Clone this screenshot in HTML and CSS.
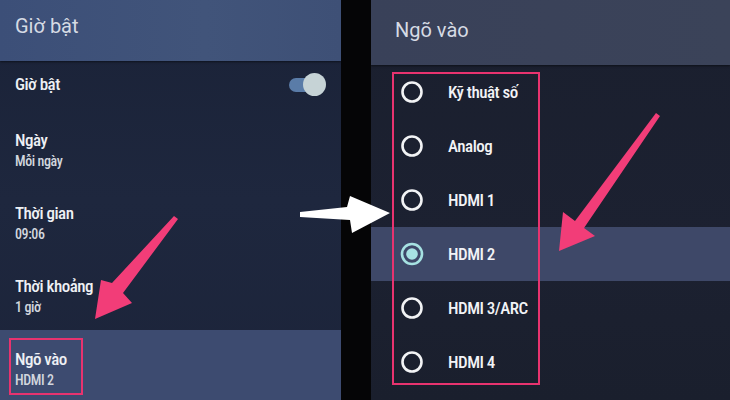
FILE: index.html
```html
<!DOCTYPE html>
<html lang="vi">
<head>
<meta charset="utf-8">
<title>Giờ bật - Ngõ vào</title>
<link rel="stylesheet" href="styles.css">
</head>
<body>
<div class="screen">
  <section class="panel panel-left">
    <header class="panel-head"><h1 class="panel-title">Giờ bật</h1></header>
    <ul class="menu">
      <li class="menu-row menu-row-single">
        <span class="item-title">Giờ bật</span>
        <span class="toggle"><span class="toggle-track"></span><span class="toggle-thumb"></span></span>
      </li>
      <li class="menu-row">
        <span class="item-title">Ngày</span>
        <span class="item-sub">Mỗi ngày</span>
      </li>
      <li class="menu-row">
        <span class="item-title">Thời gian</span>
        <span class="item-sub">09:06</span>
      </li>
      <li class="menu-row">
        <span class="item-title">Thời khoảng</span>
        <span class="item-sub">1 giờ</span>
      </li>
      <li class="menu-row menu-row-active">
        <span class="item-title">Ngõ vào</span>
        <span class="item-sub">HDMI 2</span>
      </li>
    </ul>
  </section>
  <section class="panel panel-right">
    <header class="panel-head panel-head-right"><h1 class="panel-title">Ngõ vào</h1></header>
    <ul class="options">
      <li class="option"><svg class="radio" viewBox="0 0 24 24"><circle cx="12" cy="12" r="9.5"/></svg><span class="option-label">Kỹ thuật số</span></li>
      <li class="option"><svg class="radio" viewBox="0 0 24 24"><circle cx="12" cy="12" r="9.5"/></svg><span class="option-label">Analog</span></li>
      <li class="option"><svg class="radio" viewBox="0 0 24 24"><circle cx="12" cy="12" r="9.5"/></svg><span class="option-label">HDMI 1</span></li>
      <li class="option option-active"><svg class="radio radio-on" viewBox="0 0 24 24"><circle cx="12" cy="12" r="10"/><circle class="dot" cx="12" cy="12" r="5.8"/></svg><span class="option-label">HDMI 2</span></li>
      <li class="option"><svg class="radio" viewBox="0 0 24 24"><circle cx="12" cy="12" r="9.5"/></svg><span class="option-label">HDMI 3/ARC</span></li>
      <li class="option"><svg class="radio" viewBox="0 0 24 24"><circle cx="12" cy="12" r="9.5"/></svg><span class="option-label">HDMI 4</span></li>
    </ul>
  </section>

  <div class="mark mark-left"></div>
  <div class="mark mark-right"></div>
  <svg class="arrows" viewBox="0 0 730 400" width="730" height="400">
    <polygon class="arrow-pink" points="174,216 178,219 123,293 132,303 95,319 101,280 112,283"/>
    <polygon class="arrow-pink" points="656,113 660,116 584,228 595,236 559,251 563,212 575,221"/>
    <polygon class="arrow-white" points="300,212 347,207 350,196 390,213 352,233 350,220 300,217"/>
  </svg>
</div>
</body>
</html>
```
FILE: styles.css
```css
* { box-sizing: border-box; }
html, body { margin: 0; padding: 0; }
body {
  width: 730px;
  height: 400px;
  overflow: hidden;
  background: #050506;
  font-family: "Roboto", "Liberation Sans", sans-serif;
}
.screen {
  position: relative;
  width: 730px;
  height: 400px;
  display: flex;
  gap: 30px;
  overflow: hidden;
}
.panel {
  display: flex;
  flex-direction: column;
  overflow: hidden;
  height: 400px;
}
.panel-left {
  width: 341px;
  background: linear-gradient(180deg, #1a2237 0%, #1e273e 50%, #1c243a 100%);
}
.panel-right {
  flex: 1;
  background: linear-gradient(180deg, #1a1f2e 0%, #1c2131 60%, #1a1f2d 100%);
}
.panel-head {
  height: 61px;
  flex: none;
  padding: 14px 15px 0;
  background: linear-gradient(90deg, #3c4f78 0%, #41547a 60%, #3e5076 100%);
  box-shadow: 0 1px 2px rgba(0,0,0,0.5);
}
.panel-head-right {
  height: 65px;
  padding: 18px 24px 0;
  background: linear-gradient(90deg, #394159 0%, #3b4359 100%);
}
.panel-title {
  margin: 0;
  font-weight: 400;
  font-size: 20px;
  line-height: 24px;
  color: #d6dbe4;
}
.menu, .options {
  list-style: none;
  margin: 0;
  padding: 0;
}
.menu-row {
  height: 73px;
  padding: 19px 15px 0;
  display: flex;
  flex-direction: column;
}
.menu-row-single {
  height: 50px;
  padding: 0 15px 4px;
  flex-direction: row;
  align-items: center;
  justify-content: space-between;
}
.menu-row-active {
  background: #3d4b70;
}
.item-title {
  font-weight: 500;
  font-size: 17px;
  font-stretch: 75%;
  letter-spacing: -0.5px;
  line-height: 20px;
  color: #eef0f4;
}
.item-sub {
  font-weight: 500;
  font-size: 14px;
  font-stretch: 75%;
  letter-spacing: -0.4px;
  line-height: 22px;
  color: #d2d6de;
}
.toggle {
  position: relative;
  width: 37px;
  height: 23px;
  display: block;
}
.toggle-track {
  position: absolute;
  left: 0;
  top: 5px;
  width: 30px;
  height: 14px;
  border-radius: 7px;
  background: #5a7ca8;
}
.toggle-thumb {
  position: absolute;
  right: 0;
  top: 0;
  width: 23px;
  height: 23px;
  border-radius: 50%;
  background: #c6d3d6;
}
.option {
  height: 54px;
  display: flex;
  align-items: center;
  padding-left: 29px;
}
.option-active {
  background: #3e4868;
}
.radio {
  width: 24px;
  height: 24px;
  flex: none;
  margin-right: 24px;
}
.radio circle {
  fill: none;
  stroke: #f2f3f5;
  stroke-width: 2.6;
}
.radio-on circle {
  stroke: #a6e2e2;
}
.radio-on .dot {
  fill: #a6e2e2;
  stroke: none;
}
.option-label {
  font-weight: 500;
  font-size: 17px;
  font-stretch: 75%;
  letter-spacing: -0.5px;
  line-height: 20px;
  color: #f2f3f6;
}
.mark {
  position: absolute;
  border: 2px solid #e8336f;
  pointer-events: none;
}
.mark-left {
  left: 9px;
  top: 338px;
  width: 74px;
  height: 57px;
}
.mark-right {
  left: 392px;
  top: 72px;
  width: 148px;
  height: 313px;
}
.arrows {
  position: absolute;
  left: 0;
  top: 0;
  pointer-events: none;
}
.arrow-pink { fill: #f23d78; }
.arrow-white { fill: #ffffff; }
```
